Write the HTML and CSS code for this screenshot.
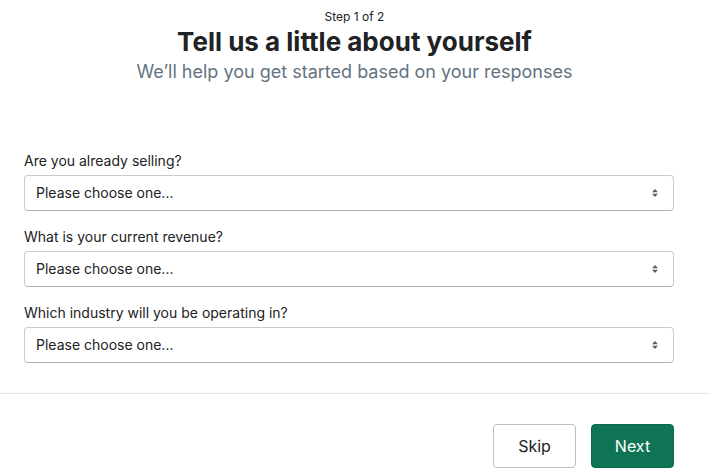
FILE: index.html
```html
<!DOCTYPE html>
<html lang="en">
<head>
<meta charset="utf-8">
<title>Tell us a little about yourself</title>
<link rel="stylesheet" href="styles.css">
</head>
<body>
<div class="page">
  <header class="header">
    <p class="step">Step 1 of 2</p>
    <h1 class="title">Tell us a little about yourself</h1>
    <p class="subtitle">We’ll help you get started based on your responses</p>
  </header>
  <form class="form">
    <div class="field">
      <label class="label">Are you already selling?</label>
      <div class="select">
        <span class="select-text">Please choose one...</span>
        <svg class="arrows" width="6" height="10" viewBox="0 0 6 10"><path d="M0 4.2L3 1L6 4.2Z M0 5.8L6 5.8L3 9Z" fill="#5c5f62"/></svg>
      </div>
    </div>
    <div class="field">
      <label class="label">What is your current revenue?</label>
      <div class="select">
        <span class="select-text">Please choose one...</span>
        <svg class="arrows" width="6" height="10" viewBox="0 0 6 10"><path d="M0 4.2L3 1L6 4.2Z M0 5.8L6 5.8L3 9Z" fill="#5c5f62"/></svg>
      </div>
    </div>
    <div class="field">
      <label class="label">Which industry will you be operating in?</label>
      <div class="select">
        <span class="select-text">Please choose one...</span>
        <svg class="arrows" width="6" height="10" viewBox="0 0 6 10"><path d="M0 4.2L3 1L6 4.2Z M0 5.8L6 5.8L3 9Z" fill="#5c5f62"/></svg>
      </div>
    </div>
  </form>
  <div class="divider"></div>
  <div class="actions">
    <button class="btn btn-secondary" type="button">Skip</button>
    <button class="btn btn-primary" type="button">Next</button>
  </div>
</div>
</body>
</html>
```
FILE: styles.css
```css
* { box-sizing: border-box; }
html, body { margin: 0; padding: 0; background: #ffffff; }
body {
  font-family: Inter, "Noto Sans", "Liberation Sans", sans-serif;
  color: #202223;
}
.page { width: 709px; }
.header {
  display: flex;
  flex-direction: column;
  align-items: center;
  padding-top: 9px;
}
.step {
  margin: 0;
  font-size: 12px;
  line-height: 16px;
  color: #202223;
}
.title {
  margin: 1px 0 0;
  font-size: 26px;
  line-height: 32px;
  font-weight: 700;
  color: #202223;
}
.subtitle {
  margin: 2px 0 0;
  font-size: 18px;
  line-height: 24px;
  color: #637381;
}
.form {
  margin-top: 67px;
  padding: 0 35px 0 24px;
  display: flex;
  flex-direction: column;
  gap: 16px;
}
.field { display: flex; flex-direction: column; gap: 4px; }
.label {
  font-size: 14px;
  line-height: 20px;
  color: #202223;
}
.select {
  height: 36px;
  border: 1px solid #c9cccf;
  border-bottom-color: #aeb4b9;
  border-radius: 4px;
  display: flex;
  align-items: center;
  justify-content: space-between;
  padding: 0 15px 0 11px;
}
.select-text { font-size: 14px; line-height: 20px; color: #202223; }
.arrows { display: block; }
.divider {
  margin-top: 30px;
  height: 1px;
  background: #e1e3e5;
}
.actions {
  display: flex;
  justify-content: flex-end;
  gap: 15px;
  padding: 30px 35px 0 0;
}
.btn {
  width: 83px;
  height: 44px;
  border-radius: 4px;
  font-family: inherit;
  font-size: 16px;
  font-weight: 400;
  cursor: pointer;
}
.btn-secondary {
  background: #ffffff;
  border: 1px solid #babfc3;
  color: #202223;
}
.btn-primary {
  background: #0f7355;
  border: 1px solid #0c6b4f;
  color: #ffffff;
}
```
